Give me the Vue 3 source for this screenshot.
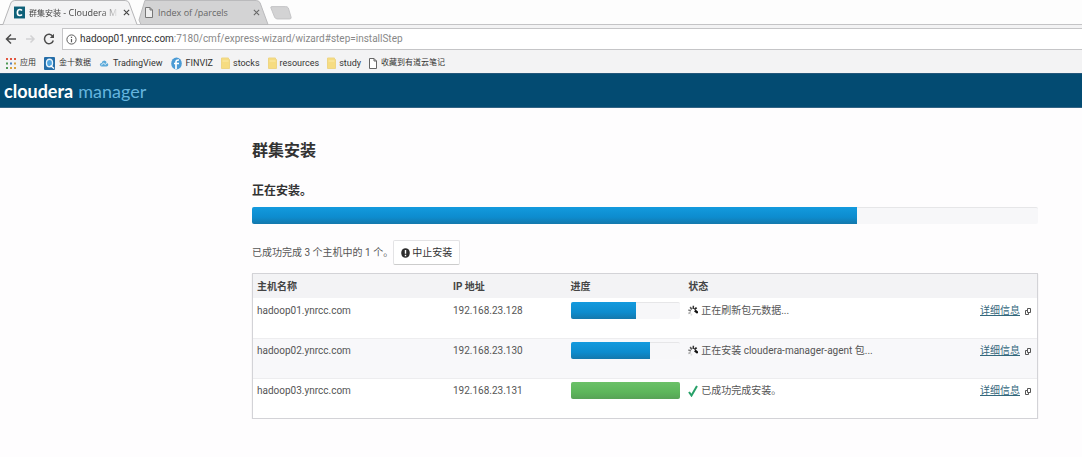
<script setup>
const bookmarks = [
  { icon: 'apps', label: '应用', cjk: true },
  { icon: 'jin', label: '金十数据', cjk: true },
  { icon: 'cloud', label: 'TradingView' },
  { icon: 'finviz', label: 'FINVIZ' },
  { icon: 'folder', label: 'stocks' },
  { icon: 'folder', label: 'resources' },
  { icon: 'folder', label: 'study' },
  { icon: 'page', label: '收藏到有道云笔记', cjk: true },
]
const hosts = [
  { name: 'hadoop01.ynrcc.com', ip: '192.168.23.128', progress: 60, status: '正在刷新包元数据...', done: false },
  { name: 'hadoop02.ynrcc.com', ip: '192.168.23.130', progress: 72, status: '正在安装 cloudera-manager-agent 包...', done: false },
  { name: 'hadoop03.ynrcc.com', ip: '192.168.23.131', progress: 100, status: '已成功完成安装。', done: true },
]
</script>

<template>
  <div class="page">
    <div class="tabs">
      <div class="tab active">
        <svg class="shape" viewBox="0 0 140 25" preserveAspectRatio="none"><path d="M0 24.5H3L11 3Q12 .5 15 .5H127Q130 .5 131 3L139 24.5" fill="#f3f3f4" stroke="#b4b4b6" /></svg>
        <svg class="fav" viewBox="0 0 12 13"><rect width="12" height="13" fill="#0e6078" /><path d="M8.7 4.3Q7.8 3.2 6.3 3.2Q3.7 3.2 3.7 6.5T6.3 9.8Q7.8 9.8 8.7 8.7" fill="none" stroke="#fff" stroke-width="1.8" /></svg>
        <span class="title fade"><span class="cjk">群集安装</span> - Cloudera M</span>
        <button class="close" aria-label="关闭标签页"><svg viewBox="0 0 8 8"><path d="M1 1l6 6M7 1L1 7" stroke="#444" stroke-width="1.3" /></svg></button>
      </div>
      <div class="tab other">
        <svg class="shape" viewBox="0 0 134 25" preserveAspectRatio="none"><path d="M3 24.5L1 20L7 0.5H120Q123 .5 124 3L132 24.5Z" fill="#d3d3d4" stroke="#b9b9bb" /></svg>
        <svg class="doc" viewBox="0 0 8 11"><path d="M.5.5H5L7.5 3V10.5H.5ZM5 .5V3H7.5" fill="#eee" stroke="#777" /></svg>
        <span class="title">Index of /parcels</span>
        <button class="close" aria-label="关闭标签页"><svg viewBox="0 0 8 8"><path d="M1 1l6 6M7 1L1 7" stroke="#666" stroke-width="1.2" /></svg></button>
      </div>
      <button class="new" aria-label="新标签页"><svg viewBox="0 0 24 15"><path d="M2 .5H17Q19 .5 20 2L23 12Q23.500 14 21.500 14H8Q6 14 5 12L1 2Q.5.5 2 .5Z" fill="#d3d3d4" stroke="#c2c2c4" /></svg></button>
    </div>

    <div class="toolbar">
      <button aria-label="后退"><svg viewBox="0 0 12 12"><path d="M11 6H2M6 1.500L1.500 6L6 10.500" fill="none" stroke="#4c4c4c" stroke-width="1.500" /></svg></button>
      <button aria-label="前进"><svg viewBox="0 0 12 12"><path d="M2 6H10M6.500 2.500L10 6L6.500 9.500" fill="none" stroke="#d2d2d4" stroke-width="1.500" /></svg></button>
      <button aria-label="重新加载"><svg viewBox="0 0 12 12"><path d="M9.700 3.300A4.500 4.700 0 1 0 10.300 7.500" fill="none" stroke="#4c4c4c" stroke-width="1.500" /><path d="M11 .8V5H6.800Z" fill="#4c4c4c" /></svg></button>
      <div class="address">
        <svg viewBox="0 0 11 11"><circle cx="5.500" cy="5.500" r="4.600" fill="none" stroke="#5c5c5c" /><path d="M5.500 5V8.200M5.500 2.700V4" stroke="#5c5c5c" stroke-width="1.200" /></svg>
        <span class="url"><span class="host">hadoop01.ynrcc.com</span>:7180/cmf/express-wizard/wizard#step=installStep</span>
      </div>
    </div>

    <nav class="bookmarks">
      <a v-for="b in bookmarks" :key="b.label" href="#" :class="{ cjk: b.cjk }">
        <svg v-if="b.icon === 'apps'" class="i10" viewBox="0 0 10 11"><g fill="#e2553f"><path d="M0 0h2v2H0zM4 0h2v2H4zM8 0h2v2H8z" /></g><path d="M0 4.500h2v2H0z" fill="#4f9a55" /><path d="M4 4.500h2v2H4z" fill="#4d80c4" /><path d="M8 4.500h2v2H8zM4 9h2v2H4zM8 9h2v2H8z" fill="#d9a13e" /><path d="M0 9h2v2H0z" fill="#4f9a55" /></svg>
        <svg v-else-if="b.icon === 'jin'" class="i11" viewBox="0 0 11 13"><rect width="11" height="13" rx="1" fill="#246da8" /><ellipse cx="5.500" cy="6" rx="3.700" ry="4.500" fill="#e8f4fc" /><ellipse cx="5.500" cy="6" rx="2.400" ry="3.100" fill="#4fa4df" /><path d="M6.500 8.500l3.500 3" stroke="#fff" stroke-width="1.300" /></svg>
        <svg v-else-if="b.icon === 'cloud'" class="i10" viewBox="0 0 10 11"><path d="M2.500 8.500Q.8 8.500.8 6.800T2.700 5Q3 2.500 5.300 2.500T7.700 5Q9.300 5.200 9.300 6.800T7.700 8.500Z" fill="#5ba9d9" /><path d="M2 7.500L4.500 5L6.200 6.500L8 4.800" fill="none" stroke="#e8f5fc" /></svg>
        <svg v-else-if="b.icon === 'finviz'" class="i11" viewBox="0 0 11 13"><ellipse cx="5.500" cy="6.500" rx="5.300" ry="6" fill="#4b9bd5" /><path d="M5 12V5Q5 2.800 8 3M3 6.500H8" fill="none" stroke="#fff" stroke-width="1.700" /></svg>
        <svg v-else-if="b.icon === 'folder'" class="i9" viewBox="0 0 9 12"><path d="M.5 1H7.500V2.500H8.500V11.500H.5Z" fill="#f6dc81" stroke="#eed584" /><path d="M1.500 4H7.500" stroke="#fbeaa9" /></svg>
        <svg v-else class="i8" viewBox="0 0 8 11"><path d="M.5.5H5L7.500 3V10.500H.5ZM5 .5V3H7.500" fill="#fff" stroke="#666" /></svg>
        <span>{{ b.label }}</span>
      </a>
    </nav>

    <header class="brand"><b>cloudera</b><span>manager</span></header>

    <main>
      <h1>群集安装</h1>
      <h2>正在安装。</h2>
      <div class="bar" role="progressbar" aria-label="总进度" aria-valuenow="77"><div class="fill" :style="{ width: '77%' }"></div></div>
      <div class="summary">
        <span>已成功完成 3 个主机中的 1 个。</span>
        <button class="abort">
          <svg viewBox="0 0 9 10"><ellipse cx="4.500" cy="5" rx="4.300" ry="4.800" fill="#2d2d2d" /><path d="M4.500 2V5.800M4.500 6.800V8.200" stroke="#fff" stroke-width="1.400" /></svg>
          中止安装
        </button>
      </div>
      <table>
        <thead>
          <tr><th class="c-host">主机名称</th><th class="c-ip">IP 地址</th><th class="c-prog">进度</th><th>状态</th><th class="c-link"></th></tr>
        </thead>
        <tbody>
          <tr v-for="h in hosts" :key="h.name">
            <td>{{ h.name }}</td>
            <td>{{ h.ip }}</td>
            <td><div class="bar" role="progressbar" :aria-label="h.name" :aria-valuenow="h.progress"><div class="fill" :class="{ done: h.done }" :style="{ width: h.progress + '%' }"></div></div></td>
            <td>
              <div class="state">
                <svg v-if="h.done" viewBox="0 0 10 12"><path d="M1 7L3.500 10.500L9 1" fill="none" stroke="#27a068" stroke-width="2" /></svg>
                <svg v-else viewBox="0 0 10 12"><g fill="none" stroke-width="1.500"><path d="M6.800 5.500L9.800 7.800" stroke="#111" stroke-width="2.400" /><path d="M6.400 4.500L8.600 2.600" stroke="#222" stroke-width="1.800" /><path d="M5.200 4L5.400 .8" stroke="#333" /><path d="M3.700 4.500L2.200 2" stroke="#555" /><path d="M2.900 6L.3 4.900" stroke="#777" /><path d="M2.600 7.500L.4 8.500" stroke="#aaa" /><path d="M3.800 8.700L3 10.500" stroke="#ddd" /></g></svg>
                <span>{{ h.status }}</span>
              </div>
            </td>
            <td>
              <div class="details">
                <a href="#">详细信息</a>
                <svg viewBox="0 0 6 7"><path d="M2.500.5H5.500V4.500H2.500ZM2.500 2.500H.5V6.500H3.500V4.500" fill="none" stroke="#555" /></svg>
              </div>
            </td>
          </tr>
        </tbody>
      </table>
    </main>
  </div>
</template>

<style>
body { margin: 0; background: #fefdfe; }
</style>

<style scoped>
.page { font-family: Roboto, "Noto Sans CJK SC", sans-serif; font-size: 10px; line-height: 16px; color: #555; }
svg { display: block; flex: none; }
button { border: 0; padding: 0; background: none; font: inherit; color: inherit; }
a { color: inherit; text-decoration: none; }

.tabs { display: flex; align-items: flex-start; height: 25px; background: #fdfdfd; box-shadow: inset 0 -1px #c4c4c6; }
.tab { position: relative; display: flex; align-items: center; height: 25px; box-sizing: border-box; font-family: "Open Sans", "Noto Sans CJK SC", sans-serif; font-size: 9px; white-space: nowrap; }
.shape { position: absolute; inset: 0; width: 100%; height: 100%; }
.fav, .doc, .title, .close { position: relative; }
.active { width: 138px; padding: 0 8px 0 14px; gap: 4px; z-index: 1; color: #444; }
.other { width: 132px; padding: 0 10px 0 7px; gap: 5px; color: #666; }
.fav { width: 11px; height: 13px; }
.doc { width: 8px; height: 11px; }
.title { flex: 1; }
.fade { mask-image: linear-gradient(to right, #000 80%, transparent); }
.cjk { font-size: 8px; }
.close svg { width: 7px; height: 7px; }
.new { padding-top: 6px; }
.new svg { width: 22px; height: 14px; }

.toolbar { display: flex; align-items: center; gap: 7px; height: 28px; padding-left: 5px; background: #f3f3f4; }
.toolbar button svg { width: 12px; height: 12px; }
.address { flex: 1; display: flex; align-items: center; gap: 3px; height: 22px; padding-left: 3px; background: #fff; border: 1px solid #c5c5c7; border-right: 0; box-sizing: border-box; }
.address svg { width: 11px; height: 11px; }
.url { font-size: 10px; color: #888; }
.host { color: #333; }

.bookmarks { display: flex; align-items: center; gap: 8px; height: 20px; padding-left: 6px; background: #f3f3f4; color: #333; font-size: 9px; }
.bookmarks a { display: flex; align-items: center; gap: 4px; white-space: nowrap; }
.bookmarks .i9 + span { margin-left: -1px; }
.i8 { width: 8px; height: 11px; }
.i9 { width: 9px; height: 12px; }
.i10 { width: 10px; height: 11px; }
.i11 { width: 11px; height: 13px; }

.brand { display: flex; align-items: center; height: 35px; padding-left: 4px; gap: 5px; box-sizing: border-box; background: #034b72; border-top: 1px solid #24577a; border-bottom: 1px solid #346485; color: #fff; font-family: Lato, sans-serif; font-size: 18px; line-height: 24px; }
.brand span { color: #65b5df; }

main { padding: 29px 44px 0 252px; }
h1 { margin: 0; font-size: 16px; line-height: 28px; color: #333; }
h2 { margin: 14px 0 4px; font-size: 12px; line-height: 24px; color: #333; }
.bar { height: 17px; box-sizing: border-box; border-top: 1px solid #e6e6e8; background: #f7f7f9; border-radius: 2px; }
.fill { height: 17px; margin-top: -1px; background: linear-gradient(#139ade, #0d8cce 60%, #1478ac); border-radius: 2px 0 0 2px; }
.done { background: linear-gradient(#6bc168, #5db65b 60%, #57a356); border-radius: 2px; }
.summary { display: flex; align-items: center; margin: 16px 0 8px; }
.abort { display: flex; align-items: center; gap: 2px; height: 25px; padding: 0 7px; border: 1px solid #e3e3e5; border-bottom-color: #ccc; border-radius: 2px; background: #fff; color: #333; }
.abort svg { width: 9px; height: 10px; }

table { width: 100%; table-layout: fixed; border-collapse: separate; border-spacing: 0; border: 1px solid #d3d3d7; box-shadow: 0 1px 1px #ddd; line-height: 18px; }
th { height: 24px; box-sizing: border-box; padding: 2px 4px 0; text-align: left; background: #f3f3f5; color: #444; }
td { height: 40px; box-sizing: border-box; padding: 4px; vertical-align: top; background: #fff; }
tbody tr:nth-child(even) td { background: #f8f8fa; }
tbody tr + tr td { border-top: 1px solid #ededef; padding-top: 3px; }
.c-host { width: 25%; }
.c-ip, .c-prog { width: 15%; }
.c-link { width: 10%; }
.state { display: flex; align-items: center; gap: 3px; white-space: nowrap; }
.state svg { width: 10px; height: 12px; }
.details { display: flex; align-items: center; justify-content: flex-end; gap: 5px; padding-right: 2px; }
.details a { color: #33677c; text-decoration: underline; }
.details svg { width: 6px; height: 7px; }
</style>
